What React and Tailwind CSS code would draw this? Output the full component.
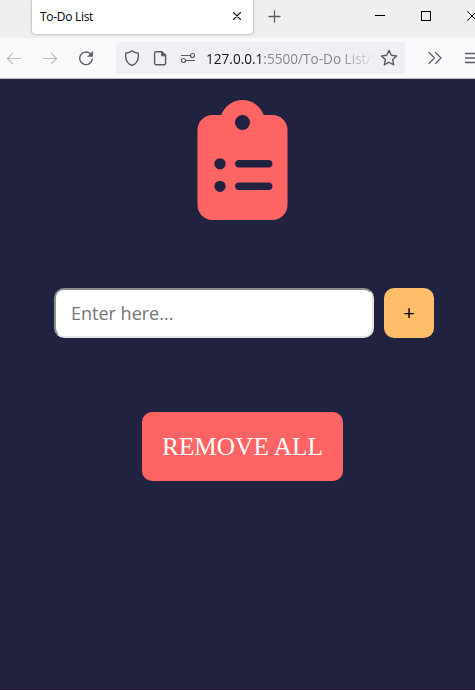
import { FaClipboardList } from "react-icons/fa6";

function Icon({ className, viewBox = "0 0 16 16", children }) {
  return (
    <svg
      className={className}
      viewBox={viewBox}
      fill="none"
      stroke="currentColor"
      strokeWidth="1.4"
      strokeLinecap="round"
      strokeLinejoin="round"
    >
      {children}
    </svg>
  );
}

function TabStrip() {
  return (
    <div className="flex h-[38px] w-[490px] items-start bg-[#efefef] pl-8">
      <div className="flex h-[34px] w-[221px] shrink-0 items-center justify-between rounded-b bg-white pr-[11px] pl-2 shadow-[0_0_3px_rgba(0,0,0,0.4)]">
        <span className="font-['Open_Sans','Noto_Sans',sans-serif] text-[12px] leading-4 tracking-[-0.3px] text-black">To-Do List</span>
        <Icon className="mt-[-2px] h-[10px] w-[10px] text-[#15141a]" viewBox="0 0 10 10">
          <path d="M1.5 1.5l7 7M8.5 1.5l-7 7" strokeWidth="1.1" />
        </Icon>
      </div>
      <Icon className="mt-[10px] ml-[15px] h-[13px] w-[13px] shrink-0 text-[#5b5b66]" viewBox="0 0 13 13">
        <path d="M6.5 1v11M1 6.5h11" strokeWidth="1.3" />
      </Icon>
      <div className="mt-[15px] ml-[94px] h-px w-[10px] shrink-0 bg-black" />
      <div className="mt-[11px] ml-[36px] h-[10px] w-[10px] shrink-0 border border-black" />
      <Icon className="mt-[11px] ml-[36px] h-[10px] w-[10px] shrink-0 text-black" viewBox="0 0 10 10">
        <path d="M0.5 0.5l9 9M9.5 0.5l-9 9" strokeWidth="1" />
      </Icon>
    </div>
  );
}

function Toolbar() {
  return (
    <div className="flex h-[41px] w-[490px] items-center border-b border-[#bdbdc0] bg-[#f9f9fb] pl-[6px] text-[#5b5b66]">
      <Icon className="h-4 w-4 shrink-0 text-[#bcbcc0]">
        <path d="M14.5 8.5H1.5M6.8 3.2L1.5 8.5l5.3 5.3" strokeWidth="1.2" />
      </Icon>
      <Icon className="ml-5 h-4 w-4 shrink-0 text-[#bcbcc0]">
        <path d="M1.5 8.5h13M9.2 3.2l5.3 5.3-5.3 5.3" strokeWidth="1.2" />
      </Icon>
      <Icon className="ml-5 h-4 w-4 shrink-0">
        <path d="M12.3 3.7A6.3 6.3 0 1 0 14.3 9" />
        <path d="M14.7 1.6v4.9H9.8z" fill="currentColor" strokeWidth="0.5" />
      </Icon>
      <div className="ml-[22px] flex h-8 w-[289px] shrink-0 items-center rounded bg-[#f0eff4] pl-2">
        <Icon className="h-4 w-4 shrink-0">
          <path d="M8 .8C6.2 2.4 4 2.9 1.7 3.2v3C1.7 10.8 4 13.9 8 15.3c4-1.4 6.3-4.5 6.3-9.1v-3C12 2.9 9.8 2.4 8 .8z" />
        </Icon>
        <Icon className="ml-3 h-4 w-4 shrink-0">
          <path d="M4 1.7h6l3.6 3.6v8a1.4 1.4 0 0 1-1.4 1.4H4a1.4 1.4 0 0 1-1.4-1.4V3.1A1.4 1.4 0 0 1 4 1.7z" />
          <path d="M9.6 2v3.8h3.8z" fill="currentColor" strokeWidth="1" />
        </Icon>
        <Icon className="ml-3 h-4 w-4 shrink-0">
          <path d="M1.5 5.5h8.5M6.5 10.5h8" strokeWidth="1.2" />
          <circle cx="12.5" cy="5.5" r="2" strokeWidth="1.2" />
          <circle cx="3.5" cy="10.5" r="2" strokeWidth="1.2" />
        </Icon>
        <div className="ml-[10px] w-[169px] shrink-0 pt-px [mask-image:linear-gradient(to_right,black_80%,transparent)]">
          <span className="block whitespace-nowrap font-['Open_Sans','Noto_Sans',sans-serif] text-[13.6px] leading-6 text-[#88878e]">
            <span className="text-[#15141a]">127.0.0.1</span>:5500/To-Do List/i
          </span>
        </div>
        <Icon className="ml-[5px] h-[18px] w-[18px] shrink-0" viewBox="0 0 18 18">
          <path d="M9 1.4l2.25 4.9 5.35.65-3.95 3.65 1.05 5.3L9 13.25 4.3 15.9l1.05-5.3L1.4 6.95l5.35-.65z" />
        </Icon>
      </div>
      <Icon className="ml-[22px] h-4 w-4 shrink-0">
        <path d="M2 2.5L7.5 8 2 13.5M8.5 2.5L14 8l-5.5 5.5" strokeWidth="1.2" />
      </Icon>
      <Icon className="ml-[21px] h-4 w-4 shrink-0">
        <path d="M1.5 3.5h13M1.5 8h13M1.5 12.5h13" strokeWidth="1.3" />
      </Icon>
    </div>
  );
}

export default function App() {
  return (
    <div className="h-[690px] w-[475px] overflow-hidden bg-[#212140]">
      <TabStrip />
      <Toolbar />
      <main className="flex h-[611px] w-[485px] flex-col items-center border-b border-[#200f30] pt-[21px]">
        <FaClipboardList className="h-[120px] w-[91px] shrink-0 text-[#ff6464]" />
        <div className="mt-[68px] flex w-full gap-[10px] pl-[54px]">
          <input
            type="text"
            placeholder="Enter here..."
            className="h-[50px] w-80 rounded-[10px] border-2 border-t-[#8f8f8f] border-r-[#e3e3e3] border-b-[#e3e3e3] border-l-[#8f8f8f] bg-white px-[15px] font-['Open_Sans','Noto_Sans',sans-serif] text-[18px] placeholder:text-[#757575]"
          />
          <button className="h-[50px] w-[50px] rounded-[10px] bg-[#ffbd69] font-['Noto_Sans',sans-serif] text-[20px] text-black">
            +
          </button>
        </div>
        <button className="mt-[74px] h-[69px] w-[201px] shrink-0 rounded-[10px] bg-[#ff6464] font-['Liberation_Serif',serif] text-[25.3px] text-white">
          REMOVE ALL
        </button>
      </main>
    </div>
  );
}
